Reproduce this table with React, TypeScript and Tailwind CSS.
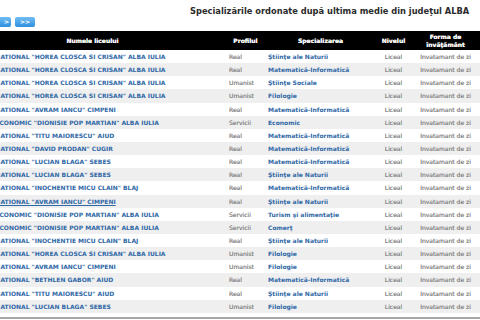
import React from "react";

const NAT = 'COLEGIUL NATIONAL';
const ECO = 'COLEGIUL ECONOMIC';

type Row = { school: string; profil: string; spec: string; hover?: boolean };

const rows: Row[] = [
  { school: `${NAT} "HOREA CLOSCA SI CRISAN" ALBA IULIA`, profil: "Real", spec: "Ştiinţe ale Naturii" },
  { school: `${NAT} "HOREA CLOSCA SI CRISAN" ALBA IULIA`, profil: "Real", spec: "Matematică-Informatică" },
  { school: `${NAT} "HOREA CLOSCA SI CRISAN" ALBA IULIA`, profil: "Umanist", spec: "Ştiinţe Sociale" },
  { school: `${NAT} "HOREA CLOSCA SI CRISAN" ALBA IULIA`, profil: "Umanist", spec: "Filologie" },
  { school: `${NAT} "AVRAM IANCU" CIMPENI`, profil: "Real", spec: "Matematică-Informatică" },
  { school: `${ECO} "DIONISIE POP MARTIAN" ALBA IULIA`, profil: "Servicii", spec: "Economic" },
  { school: `${NAT} "TITU MAIORESCU" AIUD`, profil: "Real", spec: "Matematică-Informatică" },
  { school: `${NAT} "DAVID PRODAN" CUGIR`, profil: "Real", spec: "Matematică-Informatică" },
  { school: `${NAT} "LUCIAN BLAGA" SEBES`, profil: "Real", spec: "Matematică-Informatică" },
  { school: `${NAT} "LUCIAN BLAGA" SEBES`, profil: "Real", spec: "Ştiinţe ale Naturii" },
  { school: `${NAT} "INOCHENTIE MICU CLAIN" BLAJ`, profil: "Real", spec: "Matematică-Informatică" },
  { school: `${NAT} "AVRAM IANCU" CIMPENI`, profil: "Real", spec: "Ştiinţe ale Naturii", hover: true },
  { school: `${ECO} "DIONISIE POP MARTIAN" ALBA IULIA`, profil: "Servicii", spec: "Turism şi alimentaţie" },
  { school: `${ECO} "DIONISIE POP MARTIAN" ALBA IULIA`, profil: "Servicii", spec: "Comerţ" },
  { school: `${NAT} "INOCHENTIE MICU CLAIN" BLAJ`, profil: "Real", spec: "Ştiinţe ale Naturii" },
  { school: `${NAT} "HOREA CLOSCA SI CRISAN" ALBA IULIA`, profil: "Umanist", spec: "Filologie" },
  { school: `${NAT} "AVRAM IANCU" CIMPENI`, profil: "Umanist", spec: "Filologie" },
  { school: `${NAT} "BETHLEN GABOR" AIUD`, profil: "Real", spec: "Matematică-Informatică" },
  { school: `${NAT} "TITU MAIORESCU" AIUD`, profil: "Real", spec: "Ştiinţe ale Naturii" },
  { school: `${NAT} "LUCIAN BLAGA" SEBES`, profil: "Umanist", spec: "Filologie" },
];

const cols = "grid grid-cols-[267px_39px_111px_35px_69px]";
// zero-offset shadow keeps tiny grey text from getting coloured fringes
const grey = "text-[#8c8c8c] [text-shadow:0_0_0_#8c8c8c]";

export default function App() {
  return (
    <div className="w-[480px] h-[320px] overflow-hidden bg-white font-['DejaVu_Sans',sans-serif]">
      {/* page is scrolled sideways, so the left edge is cut */}
      <div className="-ml-[41px] w-[521px]">
        <h1 className="pt-[6px] pl-[231px] text-[8.3px] leading-[10px] font-bold text-[#2b2b2b] whitespace-nowrap">
          Specializările ordonate după ultima medie din judeţul ALBA
        </h1>

        <div className="mt-[1px] flex gap-[4px] pl-[32px]">
          <button className="w-[20px] h-[10px] flex items-center justify-end pr-[2px] rounded-[2px] bg-gradient-to-b from-[#72bdf2] to-[#2b8fe0] text-white text-[6px] font-bold leading-none">
            &gt;
          </button>
          <button className="w-[20px] h-[10px] flex items-center justify-center rounded-[2px] bg-gradient-to-b from-[#72bdf2] to-[#2b8fe0] text-white text-[6px] font-bold leading-none">
            &gt;&gt;
          </button>
        </div>

        <div className={`${cols} mt-[4px] h-[19px] bg-black text-[#f4f4f4] [text-shadow:0_0_0_#f4f4f4] text-[6px] font-bold leading-[7.5px] text-center`}>
          <div className="flex items-center justify-center">Numele liceului</div>
          <div className="flex items-center justify-center">Profilul</div>
          <div className="flex items-center justify-center">Specializarea</div>
          <div className="flex items-center justify-center">Nivelul</div>
          <div className="flex items-center justify-center">
            <span>
              Forma de
              <br />
              învăţământ
            </span>
          </div>
        </div>

        {rows.map((r, i) => (
          <div
            key={i}
            className={`${cols} h-[13.15px] text-[6px] whitespace-nowrap ${i % 2 ? "bg-[#efefef]" : "bg-white"}`}
          >
            <div className="flex items-center pl-[1px] overflow-hidden">
              <a className={`font-bold text-[#2f68a6] ${r.hover ? "underline" : ""}`}>{r.school}</a>
            </div>
            <div className={`flex items-center pl-[3px] ${grey}`}>{r.profil}</div>
            <div className="flex items-center pl-[3px]">
              <a className="font-bold text-[#2f68a6]">{r.spec}</a>
            </div>
            <div className={`flex items-center justify-center ${grey}`}>Liceal</div>
            <div className={`flex items-center justify-center ${grey}`}>Invatamant de zi</div>
          </div>
        ))}

        <div className="mt-[4px] border-t-2 border-[#a8a8a8]" />
      </div>
    </div>
  );
}
